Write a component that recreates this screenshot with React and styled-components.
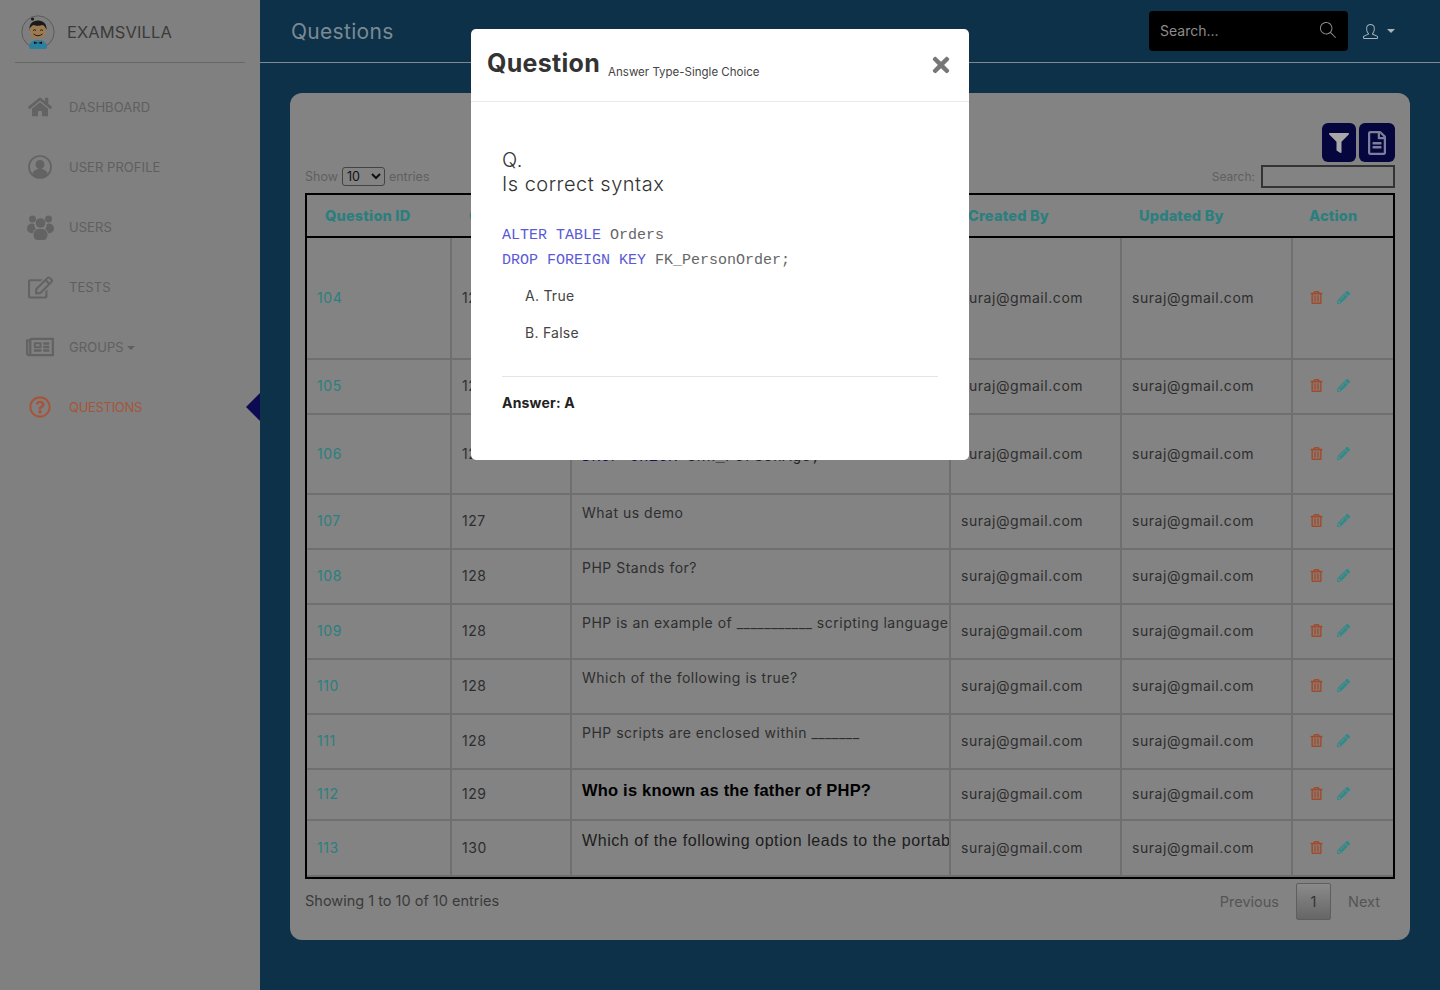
import React from "react";
import styled, { createGlobalStyle } from "styled-components";
import {
  FaHome, FaRegEdit, FaRegNewspaper, FaRegQuestionCircle,
  FaFilter, FaRegFileAlt, FaRegTrashAlt, FaPencilAlt, FaTimes,
} from "react-icons/fa";
import { SlMagnifier, SlUser } from "react-icons/sl";

const Global = createGlobalStyle`
  html, body { margin: 0; height: 990px; overflow: hidden; background: #0d3148; }
  * { box-sizing: border-box; }
  body { font-family: Inter, "Liberation Sans", sans-serif; }
`;

const Page = styled.div`display: flex; width: 1440px; height: 990px; position: relative; overflow: hidden;`;

const Sidebar = styled.aside`width: 260px; flex: none; background: #808080; padding: 0 15px; position: relative;`;
const Brand = styled.div`
  height: 63px; border-bottom: 1px solid #666; display: flex; align-items: center; gap: 12px; padding: 1px 6px 0; color: #3b3b3b;
  font-size: 16.5px; letter-spacing: .1px;
`;
const Nav = styled.nav`display: flex; flex-direction: column; padding-top: 14px;`;
const NavItem = styled.a`
  height: 60px; display: flex; align-items: center; padding-left: 10px; gap: 14px; font-size: 13px;
  letter-spacing: ${p => (p.$active ? "-.3px" : ".05px")};
  color: ${p => (p.$active ? "#a5553a" : "#5f5f5f")};
`;
const NavIcon = styled.span`width: 30px; display: flex; justify-content: center; font-size: ${p => p.$size || 24}px; color: ${p => (p.$active ? "#a5553a" : "#636363")};`;
const Caret = styled.span`
  display: inline-block; margin-left: 3px; vertical-align: 2px; border-top: 4px solid currentColor;
  border-left: 4px solid transparent; border-right: 4px solid transparent;
`;
const ActiveMark = styled.span`
  position: absolute; right: 0; top: 393px; border-right: 14px solid #0c0a50;
  border-top: 14px solid transparent; border-bottom: 14px solid transparent;
`;

const Main = styled.main`flex: 1; min-width: 0; display: flex; flex-direction: column;`;
const Topbar = styled.header`
  height: 63px; border-bottom: 1px solid #7b8a93; display: flex; align-items: center; padding: 0 45px 0 31px; color: #7b8a93;
`;
const PageTitle = styled.h1`margin: 0; font-size: 21px; font-weight: 400; flex: 1; letter-spacing: .3px;`;
const SearchBox = styled.div`
  width: 199px; height: 40px; background: #000; border-radius: 4px; display: flex; align-items: center; justify-content: space-between;
  padding: 0 12px 2px 11px; color: #8c8c8c; font-size: 14px; margin-right: 15px;
`;
const UserMenu = styled.div`display: flex; align-items: center; gap: 6px; color: #a9b3b9; font-size: 14px;`;

const Content = styled.div`padding: 30px;`;
const Card = styled.section`background: #838383; border-radius: 12px; height: 847px; padding: 30px 15px 0;`;
const Tools = styled.div`display: flex; justify-content: flex-end; gap: 3px; height: 39px;`;
const ToolButton = styled.button`
  width: ${p => p.$w}px; border: 0; border-radius: 6px; background: #06063f; color: ${p => p.$color}; display: flex; align-items: center; justify-content: center; padding: 0;
  font-size: ${p => p.$size}px;
`;
const Controls = styled.div`display: flex; justify-content: space-between; align-items: center; height: 23px; margin-top: 3px; font-size: 12.5px; color: #606060;`;
const Length = styled.label`display: flex; align-items: center; gap: 4px;`;
const LengthSelect = styled.select`
  width: 43px; height: 19px; padding: 0; background: transparent; border: 1px solid #444; border-radius: 3px; font: 12.5px Inter, sans-serif; color: #111;
`;
const Filter = styled.label`display: flex; align-items: center; gap: 6px; font-size: 12px;`;
const FilterInput = styled.input`width: 134px; height: 23px; background: transparent; border: 2px solid #333; padding: 0;`;

const TableFrame = styled.table`
  width: 1090px; margin-top: 5px; table-layout: fixed; border-collapse: separate; border-spacing: 0; border: 2px solid #000;
`;
const Th = styled.th`
  height: 43px; text-align: left; padding: 0 0 0 ${p => p.$pl || 17}px; font-size: 14.5px; font-weight: 800; color: #2b7f7f; border-bottom: 2px solid #000; letter-spacing: .2px;
`;
const Td = styled.td`
  height: ${p => p.$h}px; padding: 0 10px 2px; font-size: 14px; letter-spacing: .55px; color: ${p => p.$color || "#2e2e2e"}; vertical-align: middle;
  border-bottom: 2px solid #6f6f6f; border-right: ${p => (p.$last ? "0" : "2px solid #6f6f6f")}; overflow: hidden; white-space: nowrap;
`;
const QText = styled.p`margin: 0 0 16px; font-size: 14px; line-height: 18px; letter-spacing: .5px;`;
const QBold = styled.p`margin: 0 0 6px; font: 700 16.5px/21px "Liberation Sans", sans-serif; color: #000; letter-spacing: .2px;`;
const QArial = styled.p`margin: 0 0 14px; font: 400 16px/21px "Liberation Sans", sans-serif; color: #1c1c1c; letter-spacing: .57px;`;
const QCode = styled.p`margin: 0 0 16px; font: 15px/25px "Liberation Mono", monospace; color: #222;`;
const Kw = styled.span`color: ${p => p.$c};`;
const Actions = styled.div`display: flex; align-items: center; gap: 14px; padding-left: 7px; font-size: 13px;`;
const Footer = styled.div`display: flex; justify-content: space-between; align-items: flex-start; padding-top: 4px; font-size: 14.5px; color: #3a3a3a;`;
const Info = styled.div`padding-top: 9px;`;
const Pager = styled.div`display: flex; align-items: center; color: #555; height: 37px; margin-right: -2px;`;
const PageLink = styled.span`padding: 0 17px;`;
const PageNum = styled.span`
  width: 35px; height: 37px; display: flex; align-items: center; justify-content: center; border: 1px solid #5e5e5e; border-radius: 2px;
  background: linear-gradient(#8a8a8a, #666); color: #333;
`;

const Modal = styled.div`
  position: absolute; left: 471px; top: 29px; width: 498px; height: 431px; background: #fff; border-radius: 5px; z-index: 5;
`;
const ModalHead = styled.div`
  height: 73px; border-bottom: 1px solid #e9ecef; display: flex; align-items: flex-start; padding: 17px 16px 0; color: #333;
`;
const ModalTitle = styled.h2`margin: 0; font-size: 25px; line-height: 34px; font-weight: 700; letter-spacing: .3px;`;
const ModalSub = styled.small`margin: 19px 0 0 8px; font-size: 11.5px; line-height: 14px; color: #444; flex: 1;`;
const CloseBtn = styled.span`display: flex; font-size: 24px; color: #777; margin: 7px 0 0 0;`;
const ModalBody = styled.div`padding: 46px 31px 0;`;
const Prompt = styled.div`font-size: 20px; line-height: 24px; color: #333; font-weight: 300; letter-spacing: .5px;`;
const CodeBlock = styled.pre`margin: 27px 0 0; font: 15px/25px "Liberation Mono", monospace; color: #666;`;
const Option = styled.div`margin: ${p => p.$mt}px 0 0 23px; font-size: 14px; line-height: 20px; color: #444; letter-spacing: .25px;`;
const Rule = styled.hr`margin: 33px 0 0; border: 0; border-top: 1px solid #e5e5e5;`;
const Answer = styled.div`margin-top: 16px; font-size: 14px; line-height: 20px; font-weight: 700; color: #222; letter-spacing: .2px;`;

const Avatar = () => (
  <svg width="34" height="34" viewBox="0 0 34 34">
    <circle cx="17" cy="17" r="16.2" fill="#7e7e7e" stroke="#5c5c5c" />
    <path d="M8 33c0-5 3-8 9-8s9 3 9 8a16 16 0 0 1-18 0z" fill="#2d7f9e" />
    <path d="M13 26.5l4 1.5 4-1.5v2.5l-4-1-4 1z" fill="#111" />
    <ellipse cx="17" cy="15.5" rx="8" ry="8.5" fill="#9c7a52" />
    <path d="M8.500 15c-.5-6 3-9.500 8.500-9.500s9 3.500 8.500 9.500c-1-3-2.500-4.500-4-5-2.500 1-7 1-9 0-2 1-3.500 2.500-4.500 5z" fill="#1a1a1a" />
    <circle cx="11.500" cy="4" r="1.600" fill="#1a1a1a" />
    <path d="M12 15.500q1.500-1.500 3 0M19 15.500q1.500-1.500 3 0M12.500 19q4.500 3.500 9 0" fill="none" stroke="#2a1c10" strokeWidth="1" />
  </svg>
);

const ProfileIcon = () => (
  <svg width="24" height="24" viewBox="0 0 24 24" fill="currentColor">
    <circle cx="12" cy="12" r="11" fill="none" stroke="currentColor" strokeWidth="1.700" />
    <circle cx="12" cy="9.500" r="4.500" />
    <path d="M4.300 19.200c.7-3.800 3.900-5.200 7.700-5.200s7 1.400 7.700 5.200a10.200 10.200 0 0 1-15.400 0z" />
  </svg>
);

const UsersIcon = () => (
  <svg width="27" height="25" viewBox="0 0 27 25" fill="currentColor">
    <circle cx="5.500" cy="4" r="3.500" />
    <circle cx="21.500" cy="4" r="3.500" />
    <circle cx="13.500" cy="8" r="4.800" />
    <path d="M0 13.500C0 10.500 2.500 8.500 5 8.500c1 0 2 .3 2.500.8-.3 2 .4 3.700 1.500 4.800-1.700 1-2.800 2.400-3.300 4.200C2.500 18.300 0 16.500 0 13.500z" />
    <path d="M27 13.500c0-3-2.500-5-5-5-1 0-2 .3-2.500.8.300 2-.4 3.700-1.500 4.800 1.700 1 2.800 2.400 3.300 4.200 3.200 0 5.700-1.800 5.700-4.800z" />
    <path d="M6.500 20c0-3.500 2.500-6 5-6h4c2.500 0 5 2.500 5 6 0 3-2 5-4 5h-6c-2 0-4-2-4-5z" />
  </svg>
);

const rows = [
  [104, 125, 122, <QText key="a">What is Alter</QText>],
  [105, 126, 55, <QText key="a">What is Drop</QText>],
  [106, 126, 80, <QCode key="a"><Kw $c="#12124a">ALTER TABLE</Kw> Persons<br /><Kw $c="#12125a">DROP CHECK</Kw> chk_PersonAge;</QCode>],
  [107, 127, 55, <QText key="a">What us demo</QText>],
  [108, 128, 55, <QText key="a">PHP Stands for?</QText>],
  [109, 128, 55, <QText key="a">PHP is an example of ___________ scripting language</QText>],
  [110, 128, 55, <QText key="a">Which of the following is true?</QText>],
  [111, 128, 55, <QText key="a">PHP scripts are enclosed within _______</QText>],
  [112, 129, 51, <QBold key="a">Who is known as the father of PHP?</QBold>],
  [113, 130, 56, <QArial key="a">Which of the following option leads to the portab</QArial>],
];

const navItems = [
  ["DASHBOARD", <FaHome />, 24],
  ["USER PROFILE", <ProfileIcon />, 24],
  ["USERS", <UsersIcon />, 27],
  ["TESTS", <FaRegEdit />, 25],
  ["GROUPS", <FaRegNewspaper />, 28, true],
  ["QUESTIONS", <FaRegQuestionCircle />, 22, false, true],
];

export default function App() {
  return (
    <Page>
      <Global />
      <Sidebar>
        <Brand><Avatar /><span>EXAMSVILLA</span></Brand>
        <Nav>
          {navItems.map(([label, icon, size, caret, active]) => (
            <NavItem key={label} $active={active}>
              <NavIcon $size={size} $active={active}>{icon}</NavIcon>
              <span>{label}{caret && <Caret />}</span>
            </NavItem>
          ))}
        </Nav>
        <ActiveMark />
      </Sidebar>
      <Main>
        <Topbar>
          <PageTitle>Questions</PageTitle>
          <SearchBox>Search...<SlMagnifier size={16} /></SearchBox>
          <UserMenu><SlUser size={15} /><Caret /></UserMenu>
        </Topbar>
        <Content>
          <Card>
            <Tools>
              <ToolButton $w={34} $size={20} $color="#a8a8a8"><FaFilter /></ToolButton>
              <ToolButton $w={36} $size={24} $color="#7e7e9a"><FaRegFileAlt /></ToolButton>
            </Tools>
            <Controls>
              <Length>Show <LengthSelect defaultValue="10"><option>10</option></LengthSelect> entries</Length>
              <Filter>Search: <FilterInput /></Filter>
            </Controls>
            <TableFrame>
              <colgroup>
                <col style={{ width: 145 }} /><col style={{ width: 120 }} /><col style={{ width: 379 }} />
                <col style={{ width: 171 }} /><col style={{ width: 171 }} /><col style={{ width: 100 }} />
              </colgroup>
              <thead>
                <tr>
                  <Th $pl={18}>Question ID</Th><Th>Group ID</Th><Th>Question</Th><Th>Created By</Th><Th>Updated By</Th><Th $pl={16}>Action</Th>
                </tr>
              </thead>
              <tbody>
                {rows.map(([id, group, h, q]) => (
                  <tr key={id}>
                    <Td $h={h} $color="#2b7f7f">{id}</Td>
                    <Td $h={h}>{group}</Td>
                    <Td $h={h}>{q}</Td>
                    <Td $h={h}>suraj@gmail.com</Td>
                    <Td $h={h}>suraj@gmail.com</Td>
                    <Td $h={h} $last>
                      <Actions>
                        <FaRegTrashAlt color="#a34c2c" stroke="#a34c2c" strokeWidth={16} />
                        <FaPencilAlt color="#2f8a8a" />
                      </Actions>
                    </Td>
                  </tr>
                ))}
              </tbody>
            </TableFrame>
            <Footer>
              <Info>Showing 1 to 10 of 10 entries</Info>
              <Pager><PageLink>Previous</PageLink><PageNum>1</PageNum><PageLink>Next</PageLink></Pager>
            </Footer>
          </Card>
        </Content>
      </Main>
      <Modal>
        <ModalHead>
          <ModalTitle>Question</ModalTitle>
          <ModalSub>Answer Type-Single Choice</ModalSub>
          <CloseBtn><FaTimes /></CloseBtn>
        </ModalHead>
        <ModalBody>
          <Prompt>Q.<br />Is correct syntax</Prompt>
          <CodeBlock><Kw $c="#5a5ad6">ALTER TABLE</Kw> Orders{"\n"}<Kw $c="#5a5ad6">DROP FOREIGN KEY</Kw> FK_PersonOrder;</CodeBlock>
          <Option $mt={13}>A. True</Option>
          <Option $mt={17}>B. False</Option>
          <Rule />
          <Answer>Answer: A</Answer>
        </ModalBody>
      </Modal>
    </Page>
  );
}
